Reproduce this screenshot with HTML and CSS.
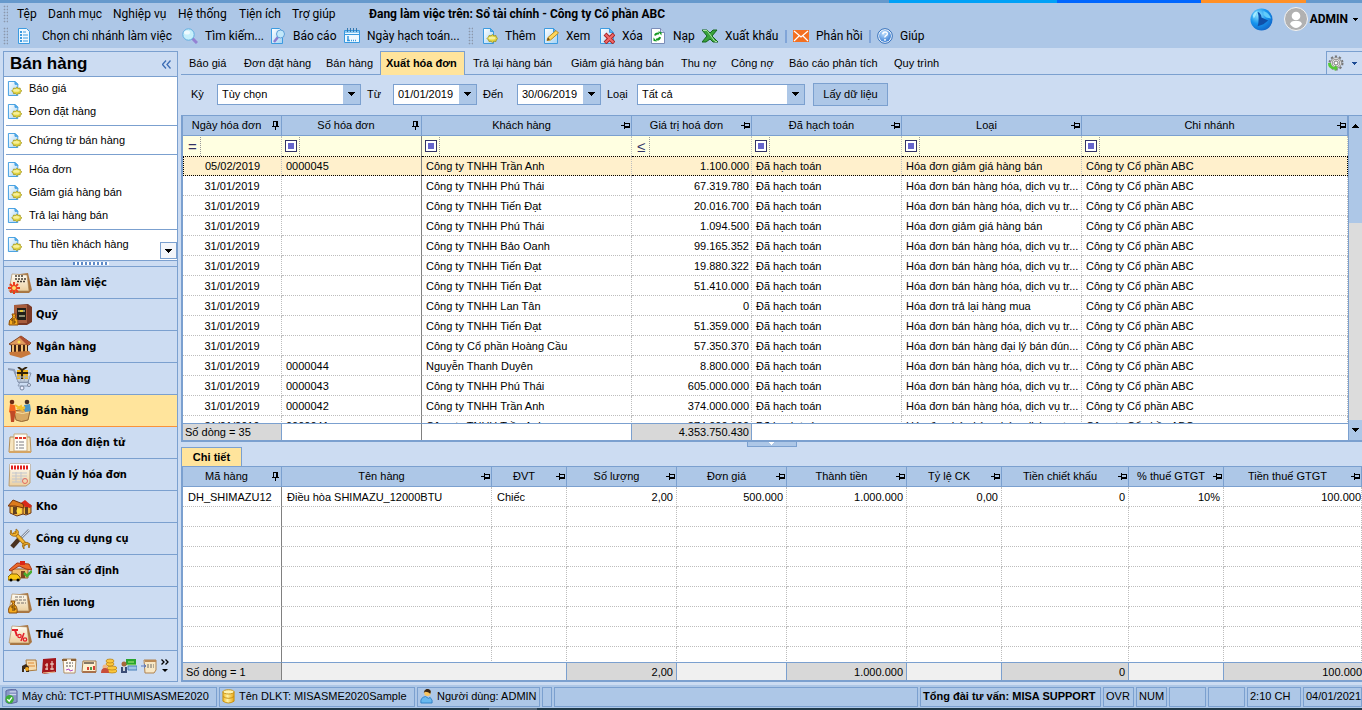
FILE: index.html
```html
<!DOCTYPE html>
<html lang="vi">
<head>
<meta charset="utf-8">
<title>Bán hàng - Xuất hóa đơn</title>
<link rel="stylesheet" href="styles.css">
</head>
<body>
<svg class="defs" aria-hidden="true">
  <defs>
    <linearGradient id="page" x1="0" y1="0" x2="1" y2="1"><stop offset="0" stop-color="#fff"/><stop offset="1" stop-color="#a5d3f4"/></linearGradient>
    <linearGradient id="gold" x1="0" y1="0" x2="1" y2="0"><stop offset="0" stop-color="#f5b921"/><stop offset=".4" stop-color="#fff3a6"/><stop offset="1" stop-color="#e9a60f"/></linearGradient>
    <radialGradient id="ball" cx=".35" cy=".3" r=".8"><stop offset="0" stop-color="#8fe4ff"/><stop offset=".5" stop-color="#1795ee"/><stop offset="1" stop-color="#0f5fc4"/></radialGradient>
    <radialGradient id="ask" cx=".4" cy=".3" r=".8"><stop offset="0" stop-color="#bfe0ff"/><stop offset="1" stop-color="#2d74cf"/></radialGradient>
    <linearGradient id="paper" x1="0" y1="0" x2="0" y2="1"><stop offset="0" stop-color="#fffdf5"/><stop offset="1" stop-color="#eccf9e"/></linearGradient>
  </defs>
  <symbol id="sheet" viewBox="0 0 16 16"><path d="M1.500.5h9l4 4v11h-13z" fill="url(#page)" stroke="#3c9be0"/><path d="M10.500.500v4h4z" fill="#5cb4ee" stroke="#3c9be0"/></symbol>
  <symbol id="add" viewBox="0 0 16 16"><path d="M1.500.5h7l3 3v12h-10z" fill="url(#page)" stroke="#3c9be0"/><path d="M8.500.5v3h3z" fill="#5cb4ee" stroke="#3c9be0"/><path d="M7 7.500l2 .3 1.500-1.300 1.500 1.300 2-.3.300 1.500 1.500 1.500-1.500 1.500-.3 1.500-2-.2-1.500 1.300-1.500-1.300-2 .2-.5-1.500-1.500-1.500 1.500-1.500z" fill="#e0d240" stroke="#9c9120" stroke-width=".8"/><ellipse cx="10" cy="10" rx="3.500" ry="1.500" fill="#f6f09a"/></symbol>
  <symbol id="branch" viewBox="0 0 16 16"><path d="M2.500.5h8l3 3v12h-11z" fill="#eef8ff" stroke="#3c9be0"/><path d="M4 3h2v2H4zM4 6h2v2H4zM4 9h2v2H4zM4 12h2v2H4z" fill="#3c9be0"/><path d="M7 4h3M7 7h5M7 10h5M7 13h5" stroke="#3c9be0"/></symbol>
  <symbol id="search" viewBox="0 0 16 16"><path d="M10 10l5 5" stroke="#9481d3" stroke-width="3"/><circle cx="6.500" cy="6.500" r="5.700" fill="#c6effb" stroke="#61aee0"/><ellipse cx="5" cy="4.500" rx="3" ry="2" fill="#fff" opacity=".7"/></symbol>
  <symbol id="report" viewBox="0 0 16 16"><path d="M1.500.5h8l3 3v12h-11z" fill="url(#page)" stroke="#3c9be0"/><path d="M4 14L8 9" stroke="#8d7bd0" stroke-width="2.500"/><circle cx="10.500" cy="6" r="4" fill="#c3e8fa" stroke="#5f9fd8"/></symbol>
  <symbol id="calendar" viewBox="0 0 16 16"><path d="M.5 2.500h15v12H.5z" fill="#eff9ff" stroke="#3899df"/><path d="M1 3h14v2H1z" fill="#8ccbf3"/><path d="M3.500 0v4M6.500 0v4M9.500 0v4M12.500 0v4" stroke="#3479b0"/><path d="M1 6.500h14" stroke="#3899df"/><path d="M4 8v5M3 12.500h3M7 12.500h1M9 12.500h1M11 12.500h1" stroke="#3899df" stroke-width="1.500"/></symbol>
  <symbol id="edit" viewBox="0 0 16 16"><use href="#sheet"/><path d="M4 12.500l1-3 8-7 2.500 2.500-8 7z" fill="#ffd65a" stroke="#b98a22"/><path d="M4 12.500l1-3 2 2z" fill="#6b4a18"/></symbol>
  <symbol id="delete" viewBox="0 0 16 16"><use href="#sheet"/><path d="M6 6l9 9M15 6l-9 9" stroke="#a82525" stroke-width="4"/><path d="M6.500 6.500l8 8M14.500 6.500l-8 8" stroke="#f06a6a" stroke-width="2"/></symbol>
  <symbol id="reload" viewBox="0 0 16 16"><path d="M1.500.5h9l4 4v11h-13z" fill="#fff" stroke="#7b8db8"/><path d="M10.500.5v4h4" fill="#ccd6ef" stroke="#7b8db8"/><path d="M5 7.500q.5-2.500 4-2M10 9q-.5 3-4 2.500" fill="none" stroke="#169a23" stroke-width="2"/><path d="M8 3.500l3.500.5v3.500zM7 13.500l-3.500-.5V9.500z" fill="#169a23"/></symbol>
  <symbol id="excel" viewBox="0 0 16 16"><path d="M0 2h5l3 3 3-3h4l-5 6 6 6h-5l-3-3-4 3H0l5-6z" fill="#39a23c" stroke="#14661d"/><path d="M1 2.500h4l8 11h2" fill="none" stroke="#a9e39e"/></symbol>
  <symbol id="mail" viewBox="0 0 16 16"><path d="M0 2h16v12H0z" fill="#f37021"/><path d="M1 3l7 6 7-6M1 13l5-5M15 13l-5-5" fill="none" stroke="#fff" stroke-width="1.200"/></symbol>
  <symbol id="help" viewBox="0 0 16 16"><circle cx="8" cy="8" r="7.300" fill="#fff" stroke="#2c6ab8"/><circle cx="8" cy="8" r="6" fill="url(#ask)"/><path d="M5.800 6.200q0-2.200 2.300-2.200t2.200 2q0 1-1.300 1.700T8 9.500M8 11v1.700" fill="none" stroke="#fff" stroke-width="1.500"/></symbol>
  <symbol id="pin-v" viewBox="0 0 7 9" shape-rendering="crispEdges"><path d="M1 0h5v1H1zM1 1h1v4H1zM4 1h2v4H4zM0 5h7v1H0zM3 6h1v3H3z"/></symbol>
  <symbol id="pin-h" viewBox="0 0 9 7" shape-rendering="crispEdges"><path d="M0 3h3v1H0zM3 0h1v7H3zM4 1h5v1H4zM4 4h5v2H4zM8 2h1v2H8z"/></symbol>
  <symbol id="caret" viewBox="0 0 7 4" shape-rendering="crispEdges"><path d="M0 0h7v1H0zM1 1h5v1H1zM2 2h3v1H2zM3 3h1v1H3z" fill="currentColor"/></symbol>
  <symbol id="board" viewBox="0 0 24 22"><path d="M4 3l16-2 4 17-3 3H2z" fill="#a97541"/><path d="M4 2l15 1 2 16H1z" fill="url(#paper)" stroke="#a98454" stroke-width=".6"/></symbol>
  <symbol id="desk" viewBox="0 0 24 22"><use href="#board"/><path d="M7 4h9M7 7h11M9 9.500h8" stroke="#443c33" stroke-width="1.300" stroke-dasharray="2 1"/><g stroke="#ed3b1c" stroke-width="2"><path d="M6 10v12M0 16h12M2 12l8 8M10 12l-8 8"/></g><circle cx="6" cy="16" r="2.500" fill="#ffdd69" stroke="#ed3b1c"/></symbol>
  <symbol id="safe" viewBox="0 0 24 22"><path d="M6 1l14-1 4 3v15l-5 3H6z" fill="#7a3925"/><path d="M6 1h13v18H6z" fill="#a85d3d"/><path d="M9 4h9v12H9z" fill="#211f19"/><path d="M10 7h7M11 12h6" stroke="#8f8f72" stroke-width="2"/><path d="M12 7h3" stroke="#e3c83a" stroke-width="2"/><path d="M4 10h4l-1 3q4 3 3 8H1q-1-5 4-8z" fill="#f4a91d" stroke="#8a4c0c"/><path d="M7 15H4v2h3v2H4" fill="none" stroke="#653907"/></symbol>
  <symbol id="bank" viewBox="0 0 24 22"><path d="M1 8L13 0l10 7-2 2H3z" fill="#e09a5e" stroke="#82431f"/><path d="M13 0l10 7-4 2-8-8z" fill="#ad4e32"/><path d="M3 9h17v7H3z" fill="#3f2114"/><path d="M5 9v9M9 9v9M14 9v9M18 9v8" stroke="#f2bd6e" stroke-width="2"/><path d="M1 16l20-1 2 3-10 4L2 19z" fill="#c8793c"/><circle cx="11" cy="6" r="1.500" fill="#ffe04d"/></symbol>
  <symbol id="cart" viewBox="0 0 24 24"><path d="M0 2l6 1 5 12h10" fill="none" stroke="#8d9cb5" stroke-width="2"/><path d="M7 6h16l-3 9H10z" fill="#d8e2ef" stroke="#8392aa"/><path d="M9 3h11v9H9z" fill="#f0b41c"/><path d="M14 2v10M9 6h11M10 0l4 3 5-3" fill="none" stroke="#33230a" stroke-width="2"/><path d="M8 10h14M9 13h11M12 8l1 7M17 8l-1 7" stroke="#a9b6c8"/><path d="M12 15l-2 4h10" fill="none" stroke="#8d9cb5"/><circle cx="14" cy="21" r="2" fill="#eef" stroke="#76859c"/><circle cx="21" cy="18" r="1.500" fill="#eef" stroke="#76859c"/></symbol>
  <symbol id="sell" viewBox="0 0 24 24"><path d="M6 12q8-3 16 0l-2 9q-7 3-12 0z" fill="#d8a963" stroke="#966632"/><path d="M7 13q8 3 14 0" fill="none" stroke="#fae0a2"/><path d="M2 5l5 1 1 8-3 2-4-3z" fill="#f3651f"/><path d="M2 12h5v5l-1 6H3z" fill="#c04a26"/><circle cx="4" cy="3" r="2.300" fill="#6b2b13"/><circle cx="19" cy="3" r="2.300" fill="#493021"/><path d="M16 6l6-1 1 7-6 1z" fill="#4997c7"/><path d="M7 6l6 4 4-2M9 10l4-3 2 5" fill="none" stroke="#f2c12b" stroke-width="2"/></symbol>
  <symbol id="einv" viewBox="0 0 24 22"><path d="M2 5h20l1 15H1z" fill="#f6e4be" stroke="#b48e57"/><path d="M6 2h13v17H6z" fill="#fffdf7" stroke="#c9ab7b"/><path d="M7 6h11" stroke="#e13a2a" stroke-width="2" stroke-dasharray="3 1"/><path d="M8 10h9M8 13h9M8 16h9" stroke="#7e7d83" stroke-dasharray="2 1 5 1"/><path d="M1 20h22" stroke="#d5a564" stroke-width="2"/></symbol>
  <symbol id="inv" viewBox="0 0 24 24"><path d="M2 1h20v19l-4 3H1z" fill="url(#paper)" stroke="#b99b70"/><path d="M2 1h20v6H2z" fill="#fff"/><path d="M3 4.500h18" stroke="#e2201c" stroke-width="4" stroke-dasharray="2 1"/><path d="M4 10h15M4 13h15M4 16h15M4 19h10M8 9v10M13 9v10" stroke="#c3c6cd"/><circle cx="17" cy="18" r="2.500" fill="none" stroke="#e36a5e"/></symbol>
  <symbol id="store" viewBox="0 0 24 20"><path d="M12 8h11v8l-5 2-6-2z" fill="#f0b33c" stroke="#713a16"/><path d="M10 8l7-5 7 6-2 2z" fill="#d9291c"/><path d="M2 9h13v8l-6 2-7-3z" fill="#f5bd46" stroke="#713a16"/><path d="M0 9l5-6 10 4 1 4-9-2z" fill="#dd7b1d" stroke="#77360c"/><path d="M5 10h4v7H5zM17 10h3v7h-3z" fill="#614020"/><circle cx="11" cy="14" r="2.500" fill="#ffdc3d"/></symbol>
  <symbol id="tools" viewBox="0 0 24 22"><path d="M12 10L4 19" stroke="#4a3221" stroke-width="4.500"/><path d="M21 2L11 12" stroke="#8791a2" stroke-width="2.500"/><path d="M21 2L11 12" stroke="#d8dfea"/><path d="M6 4l12 13" stroke="#9c6a10" stroke-width="4"/><path d="M6 4l12 13" stroke="#f6b62d" stroke-width="2.500"/><path d="M3 2l1 4 4-1V1q4 2 1.500 6-4 3-7.500-1zM21 20l-1-4-4 1v4q-3-3-.5-6 4-2 6.500 1z" fill="#f4b22a" stroke="#93600b" stroke-width=".8"/></symbol>
  <symbol id="asset" viewBox="0 0 24 22"><path d="M4 9h16v9H4z" fill="#f0bd70" stroke="#9a6330"/><path d="M1 10L9 3l12 1 3 6-6-1-7-3-8 5z" fill="#ec6a29" stroke="#a63715"/><path d="M12 1h5v4h-5z" fill="#dc2619"/><path d="M13 11h4v7h-4z" fill="#7e4620"/><path d="M0 17l3-3h6l3 3v3H0z" fill="#f9c814" stroke="#8b6306"/><circle cx="3" cy="20" r="1.500"/><circle cx="10" cy="20" r="1.500"/><path d="M16 13l3 3 5-5" stroke="#49ad31" stroke-width="2.500" fill="none"/></symbol>
  <symbol id="salary" viewBox="0 0 24 22"><use href="#board"/><path d="M7 5h9M7 8h11M9 11h9" stroke="#79706a" stroke-dasharray="3 1"/><path d="M3 9h4l-1 3q4 3 3 9H1q-2-6 4-9z" fill="#f4a91d" stroke="#8a4c0c"/><path d="M7 14H4v2h3v2H4" fill="none" stroke="#653907"/></symbol>
  <symbol id="tax" viewBox="0 0 24 22"><use href="#board"/><path d="M4 6h6M7 6l2 6" stroke="#e3202b" stroke-width="2"/><path d="M16 9l-3 8" stroke="#e3202b" stroke-width="1.500"/><circle cx="11.500" cy="12" r="1.700" fill="none" stroke="#e3202b" stroke-width="1.300"/><circle cx="17" cy="15.500" r="1.700" fill="none" stroke="#e3202b" stroke-width="1.300"/></symbol>
  <symbol id="user" viewBox="0 0 14 16"><circle cx="8" cy="4" r="3.500" fill="#f8c560"/><path d="M4 4q1-5 5-4 4 1 2 5-2-2-5-2z" fill="#3a2613"/><path d="M1 15q-1-6 5-7l3 2 2-1q3 3 2 6z" fill="#67b8ee" stroke="#2f80c6"/></symbol>
</svg>

<div class="strip"><i class="cyan"></i><i class="blue"></i><i class="orange"></i></div>

<header class="top">
  <div class="bars">
    <nav class="menu" aria-label="Menu">
      <span class="grip"></span>
      <button>Tệp</button><button>Danh mục</button><button>Nghiệp vụ</button><button>Hệ thống</button><button>Tiện ích</button><button>Trợ giúp</button>
      <strong>Đang làm việc trên: Sổ tài chính - Công ty Cổ phần ABC</strong>
    </nav>
    <div class="tools" role="toolbar" aria-label="Công cụ">
      <span class="grip"></span>
      <button class="wide"><svg><use href="#branch"/></svg>Chọn chi nhánh làm việc</button>
      <button><svg><use href="#search"/></svg>Tìm kiếm...</button>
      <button><svg><use href="#report"/></svg>Báo cáo</button>
      <button><svg><use href="#calendar"/></svg>Ngày hạch toán...</button>
      <span class="grip"></span>
      <button><svg><use href="#add"/></svg>Thêm</button>
      <button><svg><use href="#edit"/></svg>Xem</button>
      <button><svg><use href="#delete"/></svg>Xóa</button>
      <button><svg><use href="#reload"/></svg>Nạp</button>
      <button><svg><use href="#excel"/></svg>Xuất khẩu</button>
      <span class="bar"></span>
      <button><svg><use href="#mail"/></svg>Phản hồi</button>
      <span class="bar"></span>
      <button><svg><use href="#help"/></svg>Giúp</button>
    </div>
  </div>
  <div class="account">
    <svg class="globe" viewBox="0 0 24 24"><circle cx="12" cy="12" r="11.500" fill="url(#ball)"/><path d="M8 4q4 2 4 6l7 3-5 4-6 2q2-7 0-15z" fill="#0f4fa8"/><path d="M14 3q6 2 8 8l-5-1-3-3z" fill="#63cdfa"/><path d="M3 8q1-4 5-5-2 5-4 8z" fill="#a5eaff"/></svg>
    <svg class="avatar" viewBox="0 0 24 24"><circle cx="12" cy="12" r="11.500" fill="#b1b1b1" stroke="#f4f4f4"/><circle cx="12" cy="9" r="4.300" fill="#fff"/><path d="M6 17q1-3 4-3h4q3 0 4 3-3 4-6 4t-6-4z" fill="#fff"/></svg>
    <button>ADMIN<svg class="mini"><use href="#caret"/></svg></button>
  </div>
</header>

<div class="work">
  <aside class="side">
    <div class="side-head"><h1>Bán hàng</h1><button aria-label="Thu gọn"><svg viewBox="0 0 9 9"><path d="M4 .5l-3.500 4 3.500 4M8.500.5L5 4.500l3.500 4" fill="none" stroke="#3c6db5" stroke-width="1.300"/></svg></button></div>
    <div class="links">
      <ul><li><a href="#"><svg><use href="#add"/></svg>Báo giá</a></li><li><a href="#"><svg><use href="#add"/></svg>Đơn đặt hàng</a></li></ul>
      <ul><li><a href="#"><svg><use href="#add"/></svg>Chứng từ bán hàng</a></li></ul>
      <ul><li><a href="#"><svg><use href="#add"/></svg>Hóa đơn</a></li><li><a href="#"><svg><use href="#add"/></svg>Giảm giá hàng bán</a></li><li><a href="#"><svg><use href="#add"/></svg>Trả lại hàng bán</a></li></ul>
      <ul><li><a href="#"><svg><use href="#add"/></svg>Thu tiền khách hàng</a></li></ul>
      <button class="more" aria-label="Xem thêm"><svg class="arrow"><use href="#caret"/></svg></button>
    </div>
    <div class="split"><i></i></div>
    <nav class="modules" aria-label="Phân hệ">
      <a href="#"><svg><use href="#desk"/></svg>Bàn làm việc</a>
      <a href="#"><svg><use href="#safe"/></svg>Quỹ</a>
      <a href="#"><svg><use href="#bank"/></svg>Ngân hàng</a>
      <a href="#"><svg><use href="#cart"/></svg>Mua hàng</a>
      <a href="#" class="on"><svg><use href="#sell"/></svg>Bán hàng</a>
      <a href="#"><svg><use href="#einv"/></svg>Hóa đơn điện tử</a>
      <a href="#"><svg><use href="#inv"/></svg>Quản lý hóa đơn</a>
      <a href="#"><svg><use href="#store"/></svg>Kho</a>
      <a href="#"><svg><use href="#tools"/></svg>Công cụ dụng cụ</a>
      <a href="#"><svg><use href="#asset"/></svg>Tài sản cố định</a>
      <a href="#"><svg><use href="#salary"/></svg>Tiền lương</a>
      <a href="#"><svg><use href="#tax"/></svg>Thuế</a>
    </nav>
    <div class="shortcuts">
      <button aria-label="Giá thành"><svg viewBox="0 0 16 16"><path d="M5 2h10l1 10-10 1z" fill="#f5dcae" stroke="#ab7b3f"/><path d="M7 5h6M7 8h7" stroke="#e08a36"/><path d="M1 8l4-2 3 3v5H5v-3H3v3H1z" fill="#3c2a18"/><circle cx="6" cy="11" r="2" fill="#f4a81d"/></svg></button>
      <button aria-label="Sổ cái"><svg viewBox="0 0 16 16"><path d="M2 1l13-1v14l-12 2-2-1z" fill="#a3161b"/><path d="M4 7h3M9 6h4M4 11h3M9 11h4M6 5v7M11 3v9" stroke="#f6e4d7"/><path d="M2 15l12-1" stroke="#f1cf9a"/></svg></button>
      <button aria-label="Hợp đồng"><svg viewBox="0 0 16 16"><path d="M2 1h13l-1 14H3z" fill="#fffaf0" stroke="#b39065"/><path d="M1 2h5M10 2h5" stroke="#8c6338" stroke-width="2"/><path d="M5 5h7M5 8h7" stroke="#555" stroke-dasharray="2 1"/><path d="M5 12l3-1 1 2 3-1" stroke="#b14fc4" fill="none"/></svg></button>
      <button aria-label="Ngân sách"><svg viewBox="0 0 16 16"><path d="M2 3h13v11H1z" fill="#fff1d0" stroke="#a37a4a"/><path d="M2 13h13v2H1z" fill="#a9714b"/><path d="M3 5h10" stroke="#867866" stroke-width="2"/><path d="M7 9v3M13 8v4" stroke="#d74236" stroke-width="2"/><path d="M10 9v3" stroke="#4a9c51" stroke-width="2"/></svg></button>
      <button aria-label="Cổ đông"><svg viewBox="0 0 16 16"><g fill="#fbc73c" stroke="#b37c12" stroke-width=".7"><ellipse cx="11" cy="13" rx="5" ry="2"/><ellipse cx="11" cy="10" rx="5" ry="2"/><ellipse cx="9" cy="6" rx="4" ry="2"/><ellipse cx="9" cy="3" rx="4" ry="2"/></g><circle cx="4" cy="9" r="2.500" fill="#f0b784"/><path d="M0 15q0-5 4-5t4 5z" fill="#c84d3a"/></svg></button>
      <button aria-label="Nhân viên"><svg viewBox="0 0 16 16"><path d="M5 1h10v6H5z" fill="#28a52e"/><path d="M7 4h6M6 7h9" stroke="#b6ed7f"/><path d="M7 8h9v4H7z" fill="#9fc4e8" stroke="#467fb8"/><circle cx="3" cy="6" r="2.500" fill="#a7683b"/><path d="M0 9h6v6H0z" fill="#3b4d75"/><path d="M3 9v4" stroke="#fff" stroke-width="1.500"/></svg></button>
      <button aria-label="Tài liệu"><svg viewBox="0 0 16 16"><path d="M3 2h12v10l-2 3H4z" fill="#f8e8c6" stroke="#b08350"/><path d="M4 2h11v2H4z" fill="#bd8a54"/><path d="M6 7h7M6 9h7" stroke="#6e6a64" stroke-dasharray="2 1"/><path d="M0 8h5M3 6l2 2-2 2" stroke="#5a7bc6" fill="none"/></svg></button>
      <button class="tiny" aria-label="Cấu hình"><svg viewBox="0 0 8 14"><path d="M.5.5L3 3 .5 5.500M4.500.5L7 3 4.500 5.500" fill="none" stroke="#000" stroke-width="1.300"/><path d="M1 10h6L4 13z"/></svg></button>
    </div>
  </aside>

  <main class="main">
    <div class="tabs">
      <nav aria-label="Nghiệp vụ bán hàng">
        <a href="#">Báo giá</a><a href="#">Đơn đặt hàng</a><a href="#">Bán hàng</a><a href="#" class="on">Xuất hóa đơn</a><a href="#">Trả lại hàng bán</a><a href="#">Giảm giá hàng bán</a><a href="#">Thu nợ</a><a href="#">Công nợ</a><a href="#">Báo cáo phân tích</a><a href="#">Quy trình</a>
      </nav>
      <button class="gear" aria-label="Tùy chọn"><svg class="cog" viewBox="0 0 16 16"><circle cx="8" cy="8" r="6.500" fill="none" stroke="#777" stroke-width="2" stroke-dasharray="2.200 1.900"/><circle cx="8" cy="8" r="4.500" fill="#eee" stroke="#888" stroke-width="2.600"/><circle cx="8" cy="8" r="4.500" fill="none" stroke="#ddd" stroke-width="1.200"/><circle cx="8" cy="8" r="2" fill="#fff" stroke="#777"/><path d="M0 8q0 6 6 6l1 2 3-3-3-3v2q-4 0-4-4z" fill="#55cb35"/></svg><svg class="mini"><use href="#caret"/></svg></button>
    </div>

    <form class="filter">
      <label class="l-s" for="ky">Kỳ</label>
      <span class="combo c-m"><select id="ky"><option>Tùy chọn</option></select><i><svg class="arrow"><use href="#caret"/></svg></i></span>
      <label class="l-s" for="tu">Từ</label>
      <span class="combo c-d"><input id="tu" value="01/01/2019"><i><svg class="arrow"><use href="#caret"/></svg></i></span>
      <label class="l-l" for="den">Đến</label>
      <span class="combo c-d"><input id="den" value="30/06/2019"><i><svg class="arrow"><use href="#caret"/></svg></i></span>
      <label class="l-m" for="loai">Loại</label>
      <span class="combo c-l"><select id="loai"><option>Tất cả</option></select><i><svg class="arrow"><use href="#caret"/></svg></i></span>
      <button type="button">Lấy dữ liệu</button>
    </form>

    <section class="grid master">
      <div class="pane">
        <div class="scroll">
          <table>
            <colgroup><col class="w99"><col class="w140"><col class="w210"><col class="w120"><col class="w150"><col class="w180"><col></colgroup>
            <thead>
              <tr><th><div><span>Ngày hóa đơn</span><svg class="pv"><use href="#pin-v"/></svg></div></th><th><div><span>Số hóa đơn</span><svg class="pv"><use href="#pin-v"/></svg></div></th><th><div><span>Khách hàng</span><svg class="ph"><use href="#pin-h"/></svg></div></th><th><div><span>Giá trị hoá đơn</span><svg class="ph"><use href="#pin-h"/></svg></div></th><th><div><span>Đã hạch toán</span><svg class="ph"><use href="#pin-h"/></svg></div></th><th><div><span>Loại</span><svg class="ph"><use href="#pin-h"/></svg></div></th><th><div><span>Chi nhánh</span><svg class="ph"><use href="#pin-h"/></svg></div></th></tr>
              <tr class="find"><td><b class="op">=</b></td><td><b><i></i></b></td><td><b><i></i></b></td><td><b class="op">≤</b></td><td><b><i></i></b></td><td><b><i></i></b></td><td><b><i></i></b></td></tr>
            </thead>
            <tbody>
              <tr class="sel"><td>05/02/2019</td><td>0000045</td><td>Công ty TNHH Trần Anh</td><td>1.100.000</td><td>Đã hạch toán</td><td>Hóa đơn giảm giá hàng bán</td><td>Công ty Cổ phần ABC</td></tr>
              <tr><td>31/01/2019</td><td></td><td>Công ty TNHH Phú Thái</td><td>67.319.780</td><td>Đã hạch toán</td><td>Hóa đơn bán hàng hóa, dịch vụ tr...</td><td>Công ty Cổ phần ABC</td></tr>
              <tr><td>31/01/2019</td><td></td><td>Công ty TNHH Tiến Đạt</td><td>20.016.700</td><td>Đã hạch toán</td><td>Hóa đơn bán hàng hóa, dịch vụ tr...</td><td>Công ty Cổ phần ABC</td></tr>
              <tr><td>31/01/2019</td><td></td><td>Công ty TNHH Phú Thái</td><td>1.094.500</td><td>Đã hạch toán</td><td>Hóa đơn giảm giá hàng bán</td><td>Công ty Cổ phần ABC</td></tr>
              <tr><td>31/01/2019</td><td></td><td>Công ty TNHH Bảo Oanh</td><td>99.165.352</td><td>Đã hạch toán</td><td>Hóa đơn bán hàng hóa, dịch vụ tr...</td><td>Công ty Cổ phần ABC</td></tr>
              <tr><td>31/01/2019</td><td></td><td>Công ty TNHH Tiến Đạt</td><td>19.880.322</td><td>Đã hạch toán</td><td>Hóa đơn bán hàng hóa, dịch vụ tr...</td><td>Công ty Cổ phần ABC</td></tr>
              <tr><td>31/01/2019</td><td></td><td>Công ty TNHH Tiến Đạt</td><td>51.410.000</td><td>Đã hạch toán</td><td>Hóa đơn bán hàng hóa, dịch vụ tr...</td><td>Công ty Cổ phần ABC</td></tr>
              <tr><td>31/01/2019</td><td></td><td>Công ty TNHH Lan Tân</td><td>0</td><td>Đã hạch toán</td><td>Hóa đơn trả lại hàng mua</td><td>Công ty Cổ phần ABC</td></tr>
              <tr><td>31/01/2019</td><td></td><td>Công ty TNHH Tiến Đạt</td><td>51.359.000</td><td>Đã hạch toán</td><td>Hóa đơn bán hàng hóa, dịch vụ tr...</td><td>Công ty Cổ phần ABC</td></tr>
              <tr><td>31/01/2019</td><td></td><td>Công ty Cổ phần Hoàng Cầu</td><td>57.350.370</td><td>Đã hạch toán</td><td>Hóa đơn bán hàng đại lý bán đún...</td><td>Công ty Cổ phần ABC</td></tr>
              <tr><td>31/01/2019</td><td>0000044</td><td>Nguyễn Thanh Duyên</td><td>8.800.000</td><td>Đã hạch toán</td><td>Hóa đơn bán hàng hóa, dịch vụ tr...</td><td>Công ty Cổ phần ABC</td></tr>
              <tr><td>31/01/2019</td><td>0000043</td><td>Công ty TNHH Phú Thái</td><td>605.000.000</td><td>Đã hạch toán</td><td>Hóa đơn bán hàng hóa, dịch vụ tr...</td><td>Công ty Cổ phần ABC</td></tr>
              <tr><td>31/01/2019</td><td>0000042</td><td>Công ty TNHH Trần Anh</td><td>374.000.000</td><td>Đã hạch toán</td><td>Hóa đơn bán hàng hóa, dịch vụ tr...</td><td>Công ty Cổ phần ABC</td></tr>
              <tr><td>31/01/2019</td><td>0000041</td><td>Công ty TNHH Trần Anh</td><td>374.000.000</td><td>Đã hạch toán</td><td>Hóa đơn bán hàng hóa, dịch vụ tr...</td><td>Công ty Cổ phần ABC</td></tr>
            </tbody>
          </table>
        </div>
        <table class="sum">
          <colgroup><col class="w99"><col class="w140"><col class="w210"><col class="w120"><col></colgroup>
          <tbody><tr><td class="g">Số dòng = 35</td><td></td><td></td><td class="g">4.353.750.430</td><td></td></tr></tbody>
        </table>
      </div>
      <div class="vbar"><button aria-label="Lên"><svg class="arrow up"><use href="#caret"/></svg></button><i></i><button aria-label="Xuống"><svg class="arrow"><use href="#caret"/></svg></button></div>
    </section>

    <div class="handle"><button aria-label="Ẩn chi tiết"><svg class="mini"><use href="#caret"/></svg></button></div>
    <div class="subtabs"><button>Chi tiết</button></div>

    <section class="grid detail">
      <div class="pane">
        <div class="scroll">
          <table>
            <colgroup><col class="w99"><col class="w210"><col class="w75"><col class="w110"><col class="w110"><col class="w120"><col class="w95"><col class="w127"><col class="w95"><col></colgroup>
            <thead><tr><th><div><span>Mã hàng</span><svg class="pv"><use href="#pin-v"/></svg></div></th><th><div><span>Tên hàng</span><svg class="ph"><use href="#pin-h"/></svg></div></th><th><div><span>ĐVT</span><svg class="ph"><use href="#pin-h"/></svg></div></th><th><div><span>Số lượng</span><svg class="ph"><use href="#pin-h"/></svg></div></th><th><div><span>Đơn giá</span><svg class="ph"><use href="#pin-h"/></svg></div></th><th><div><span>Thành tiền</span><svg class="ph"><use href="#pin-h"/></svg></div></th><th><div><span>Tỷ lệ CK</span><svg class="ph"><use href="#pin-h"/></svg></div></th><th><div><span>Tiền chiết khấu</span><svg class="ph"><use href="#pin-h"/></svg></div></th><th><div><span>% thuế GTGT</span><svg class="ph"><use href="#pin-h"/></svg></div></th><th><div><span>Tiền thuế GTGT</span><svg class="ph"><use href="#pin-h"/></svg></div></th></tr></thead>
            <tbody>
              <tr><td>DH_SHIMAZU12</td><td>Điều hòa SHIMAZU_12000BTU</td><td>Chiếc</td><td>2,00</td><td>500.000</td><td>1.000.000</td><td>0,00</td><td>0</td><td>10%</td><td>100.000</td></tr>
              <tr><td></td><td></td><td></td><td></td><td></td><td></td><td></td><td></td><td></td><td></td></tr>
              <tr><td></td><td></td><td></td><td></td><td></td><td></td><td></td><td></td><td></td><td></td></tr>
              <tr><td></td><td></td><td></td><td></td><td></td><td></td><td></td><td></td><td></td><td></td></tr>
              <tr><td></td><td></td><td></td><td></td><td></td><td></td><td></td><td></td><td></td><td></td></tr>
              <tr><td></td><td></td><td></td><td></td><td></td><td></td><td></td><td></td><td></td><td></td></tr>
              <tr><td></td><td></td><td></td><td></td><td></td><td></td><td></td><td></td><td></td><td></td></tr>
              <tr><td></td><td></td><td></td><td></td><td></td><td></td><td></td><td></td><td></td><td></td></tr>
              <tr><td></td><td></td><td></td><td></td><td></td><td></td><td></td><td></td><td></td><td></td></tr>
            </tbody>
          </table>
        </div>
        <table class="sum">
          <colgroup><col class="w99"><col class="w285"><col class="w110"><col class="w110"><col class="w120"><col class="w95"><col class="w127"><col class="w95"><col></colgroup>
          <tbody><tr><td class="g">Số dòng = 1</td><td></td><td class="g">2,00</td><td></td><td class="g">1.000.000</td><td></td><td class="g">0</td><td></td><td class="g">100.000</td></tr></tbody>
        </table>
      </div>
    </section>
  </main>
</div>

<footer class="status">
  <span class="s1"><svg viewBox="0 0 14 16"><path d="M3 1l8-1 2 2v12l-8 2-4-2V2z" fill="#8997c6" stroke="#59659c"/><path d="M5 3h7M5 6h7" stroke="#dfe5f7"/><circle cx="5" cy="11" r="4.500" fill="#3eae3a"/><path d="M2.500 11l2 2 3-4" stroke="#fff" stroke-width="1.500" fill="none"/></svg>Máy chủ: TCT-PTTHU\MISASME2020</span>
  <span class="s2"><svg viewBox="0 0 14 16"><path d="M1 3v10q6 4 12 0V3z" fill="url(#gold)" stroke="#c48f12"/><ellipse cx="7" cy="3" rx="6" ry="2.300" fill="#fff3b0" stroke="#c48f12"/><path d="M1 8q6 4 12 0" fill="none" stroke="#c48f12"/></svg>Tên DLKT: MISASME2020Sample</span>
  <span class="s3"><svg><use href="#user"/></svg>Người dùng: ADMIN</span>
  <span class="s4"></span>
  <span class="s5"></span>
  <span class="s6">Tổng đài tư vấn: MISA SUPPORT</span>
  <span class="s7">OVR</span>
  <span class="s7">NUM</span>
  <span class="s8"></span>
  <span class="s8"></span>
  <span class="s9">2:10 CH</span>
  <span class="s9 last">04/01/2021</span>
</footer>
<div class="edge"><i></i></div>
</body>
</html>
```
FILE: styles.css
```css
:root {
  --line: #7ba0cf;
  --bar: #adc7e7;
  --panel: #ccdcf2;
  --dots: #bdbdbd;
  --ui: Roboto, "Open Sans", sans-serif;
  --grid: "Liberation Sans", Arial, sans-serif;
}
* { box-sizing: border-box; }
body {
  margin: 0;
  height: 100vh;
  display: flex;
  flex-direction: column;
  overflow: hidden;
  background: var(--panel);
  color: #000;
  font: 11px/19px var(--grid);
}
button, input, select { font: inherit; color: inherit; border: 0; background: none; padding: 0; margin: 0; white-space: nowrap; }
a { color: inherit; text-decoration: none; }
svg { display: block; flex: none; width: 16px; height: 16px; }
.defs { position: absolute; width: 0; height: 0; }
svg.mini { width: 5px; height: 3px; }
svg.arrow { width: 7px; height: 4px; }
svg.up { transform: rotate(180deg); }

.strip { flex: none; height: 3px; background: #6699cc; display: flex; justify-content: flex-end; padding-right: 56px; }
.cyan { width: 168px; background: #00a1f7; }
.blue { width: 144px; background: #0066ff; }
.orange { width: 105px; background: #ff9027; }

.top { flex: none; display: flex; justify-content: space-between; background: var(--bar); font: 12px/22px var(--ui); }
.bars { padding: 0 0 1px 3px; }
.menu { display: grid; grid-template-columns: 14px 31px 65px 65px 61px 53px 77px auto; height: 22px; align-items: center; }
.menu button { text-align: left; }
.menu strong { font-weight: 700; white-space: nowrap; }
.tools { display: grid; grid-template-columns: 13px 166px 88px 74px 124px 14px 61px 56px 51px 52px 83px 8px 76px 8px 60px; height: 22px; align-items: center; }
.tools button { display: flex; align-items: center; gap: 7px; }
.tools .wide { gap: 10px; }
.grip { width: 5px; height: 18px; background: radial-gradient(circle, #8b97ab 40%, transparent 50%) 0 0 / 3px 3px; }
.bar { width: 2px; height: 13px; background: #81a5d8; }
.account { display: flex; align-items: center; height: 32px; padding-right: 4px; }
.globe { width: 23px; height: 23px; margin-right: 11px; }
.avatar { width: 24px; height: 24px; }
.account button { display: flex; align-items: center; gap: 5px; padding-left: 2px; font-weight: 700; }

.work { flex: 1; min-height: 0; display: flex; gap: 3px; padding: 3px 0 3px 3px; }
.side { width: 175px; border: 1px solid var(--line); display: flex; flex-direction: column; }
.side-head { flex: none; height: 25px; display: flex; align-items: center; justify-content: space-between; padding: 0 6px; border-bottom: 1px solid var(--line); }
.side-head h1 { margin: 0; font: bold 17px/24px var(--grid); }
.side-head svg { width: 9px; height: 9px; }
.links { position: relative; flex: 1; background: #fff; padding-left: 2px; }
.links ul { list-style: none; margin: 0; padding: 3px 0 2px; }
.links ul:first-child { padding-top: 0; }
.links ul + ul { border-top: 1px solid var(--line); }
.links a { display: flex; align-items: center; gap: 7px; height: 23px; }
.links svg { width: 15px; height: 15px; margin-left: 1px; }
.more { position: absolute; right: 0; bottom: 1px; width: 17px; height: 17px; border: 1px solid var(--line); background: #f4f6fa; }
.more svg.arrow { margin: auto; width: 7px; height: 4px; }
.split { flex: none; height: 7px; border-top: 1px solid var(--line); border-bottom: 1px solid var(--line); display: flex; justify-content: center; padding-top: 1px; }
.split i { width: 36px; height: 3px; background: linear-gradient(90deg, #5f8bc9 50%, #fff 50%) 0 0 / 4px 3px; }
.modules { flex: none; }
.modules a { display: flex; align-items: center; gap: 8px; height: 32px; padding-left: 4px; border-bottom: 1px solid var(--line); font: bold 11px/20px "DejaVu Sans Condensed", "Noto Sans", sans-serif; }
.modules svg { width: 24px; height: 24px; margin-right: -4px; }
.modules .on { background: #ffe49c; border-bottom-color: #f9923b; }
.shortcuts { flex: none; height: 30px; display: flex; align-items: center; gap: 4px; padding-left: 17px; }
.tiny svg { width: 8px; height: 14px; }

.main { flex: 1; min-width: 0; display: grid; grid-template-columns: minmax(0, 1fr); grid-template-rows: 24px 40px minmax(0, 327fr) 5px 19px minmax(0, 216fr); }
.tabs { display: flex; justify-content: space-between; border-bottom: 1px solid var(--line); }
.tabs nav { display: grid; grid-template-columns: 55px 82px 62px 85px 98px 110px 50px 58px 105px 64px; }
.tabs nav a { padding-left: 8px; line-height: 24px; white-space: nowrap; }
.tabs nav .on { padding-left: 5px; font-weight: bold; background: #ffe49c; border: 1px solid var(--line); border-bottom: 0; line-height: 23px; }
.gear { width: 36px; display: flex; align-items: center; gap: 8px; padding-left: 1px; border: 1px solid var(--line); border-width: 1px 0 0 1px; color: #1d4b94; }

.filter { display: flex; align-items: center; padding: 0 0 2px 10px; margin: 0; }
.l-s { width: 26px; }
.l-m { width: 30px; }
.l-l { width: 34px; }
.combo { display: flex; height: 21px; border: 1px solid var(--line); background: #fff; margin-right: 6px; }
.combo select, .combo input { flex: 1; min-width: 0; appearance: none; padding-left: 4px; background: #fff; outline: 0; }
.combo i { width: 17px; background: var(--bar); display: flex; align-items: center; justify-content: center; }
.c-m { width: 144px; }
.c-d { width: 84px; }
.c-l { width: 168px; }
.filter button { width: 75px; height: 23px; margin-left: 2px; background: var(--bar); border: 1px solid var(--line); }

.grid { display: flex; min-height: 0; border: 2px solid var(--line); border-width: 1px 0 2px 2px; background: #fff; }
.pane { flex: 1; min-width: 0; display: flex; flex-direction: column; }
.scroll { flex: 1; min-height: 0; overflow: hidden; }
table { width: 100%; table-layout: fixed; border-collapse: separate; border-spacing: 0; }
.w75 { width: 75px; }
.w95 { width: 95px; }
.w99 { width: 99px; }
.w110 { width: 110px; }
.w120 { width: 120px; }
.w127 { width: 127px; }
.w140 { width: 140px; }
.w150 { width: 150px; }
.w180 { width: 180px; }
.w210 { width: 210px; }
.w285 { width: 285px; }
th { height: 20px; padding: 0; font-weight: normal; background: var(--bar); border-right: 1px solid var(--line); border-bottom: 1px solid var(--line); }
th div { display: flex; align-items: center; padding-right: 1px; white-space: nowrap; }
th span { flex: 1; }
.pv { width: 7px; height: 9px; margin: 0 1px 0 2px; }
.ph { width: 9px; height: 7px; }
td { height: 20px; padding: 1px 4px 0; line-height: 18px; border-right: 1px dotted var(--dots); border-bottom: 1px dotted var(--dots); white-space: nowrap; overflow: hidden; }
.find td { height: 20px; padding: 0; background: #ffffe1; border-bottom: 0; }
.find b { display: flex; align-items: center; width: 18px; height: 19px; padding-left: 3px; border-right: 1px dotted #999; color: #333366; }
.find .op { padding-left: 5px; font: 15px/19px var(--grid); }
.find b i { width: 12px; height: 12px; border: 1px solid #333366; background: #6666cc; box-shadow: inset 0 0 0 2px #fff; }
.sel td { padding-top: 0; background: #fff0cc; border-top: 1px dotted #000; border-bottom: 1px dotted #000; }
.sel td:first-child { border-left: 1px dotted #000; }
.sel td:last-child { border-right-color: #000; }
.master tbody td:first-child { text-align: center; }
.master td:nth-child(4) { text-align: right; padding-right: 2px; }
.master td:nth-child(6) { padding-right: 0; }
.detail td:first-child, .master td:nth-child(2) { border-right: 1px solid #808080; }
.detail td { padding: 1px 3px 0 5px; }
.detail td:nth-child(n+4) { text-align: right; }
.detail td:last-child { padding-right: 0; }
.sum { flex: none; }
.sum td { height: 17px; padding-top: 0; line-height: 15px; border: 0; border-top: 1px solid var(--line); border-right: 1px solid var(--line); background: #fff; }
.master .sum td:first-child { text-align: left; padding-left: 2px; }
.sum td:last-child { border-right: 0; }
.detail .sum td { height: 18px; padding-top: 0; line-height: 16px; background: #f0f0f0; text-align: right; }
.detail .sum td:first-child { text-align: left; padding-left: 3px; }
.sum td.g, .detail .sum td.g { background: #d8d8d8; }
.vbar { flex: none; width: 14px; display: flex; flex-direction: column; background: linear-gradient(var(--bar) 107px, #dcdcdc 107px); border-left: 1px solid var(--line); }
.vbar i { flex: 1; }
.vbar button { height: 20px; background: var(--bar); display: flex; align-items: center; justify-content: center; }

.handle { display: flex; justify-content: center; }
.handle button { width: 50px; height: 5px; display: flex; justify-content: center; background: var(--bar); border: 1px solid var(--line); border-top: 0; color: #fff; }
.subtabs { display: flex; }
.subtabs button { width: 61px; background: #ffe49c; border: 1px solid var(--line); border-bottom: 0; font-weight: bold; }

.status { flex: none; height: 23px; display: flex; align-items: center; gap: 2px; padding: 0 0 0 2px; background: var(--bar); white-space: nowrap; }
.status span { display: flex; align-items: center; gap: 4px; height: 20px; border: 1px solid var(--line); padding: 0 2px; flex: none; }
.status svg { width: 13px; height: 15px; }
.s1 { width: 215px; }
.s2 { width: 196px; }
.s3 { width: 123px; }
.s4 { width: 10px; }
.status .s5 { flex: 1; }
.s6 { width: 181px; font-weight: bold; }
.s7 { width: 31px; }
.s8 { width: 37px; }
.s9 { width: 54px; }
.status .last { width: 59px; }
.edge { flex: none; height: 2px; background: #203a4a; padding-left: 489px; }
.edge i { display: block; width: 48px; height: 2px; background: #536778; }
```
